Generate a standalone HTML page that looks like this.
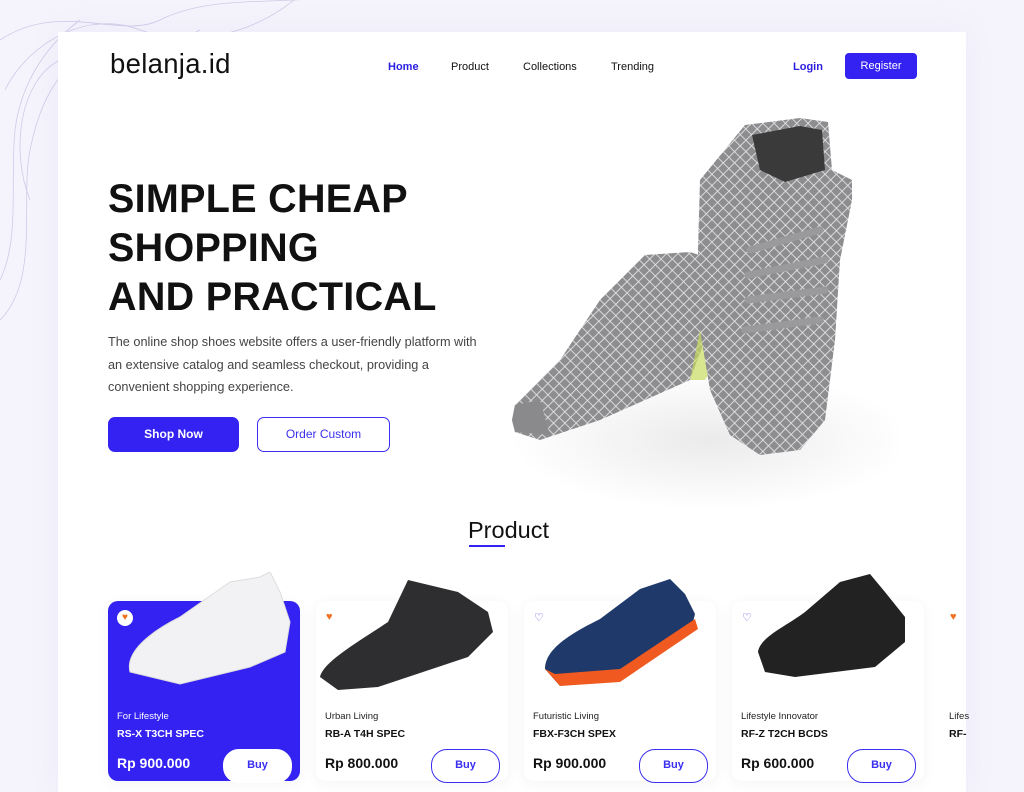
<!DOCTYPE html>
<html><head><meta charset="utf-8"><style>
*{margin:0;padding:0;box-sizing:border-box}
body{width:1024px;height:768px;overflow:hidden;background:#f5f4fc;font-family:"Liberation Sans",sans-serif;position:relative}
.card{position:absolute;left:58px;top:32px;width:908px;height:760px;background:#fff;box-shadow:0 0 30px rgba(120,110,220,.08)}
.a{position:absolute}
.nav{font-size:11px;color:#111;top:61px}
h1{position:absolute;left:108px;top:175px;font-size:39.5px;line-height:49px;font-weight:700;color:#111;letter-spacing:.3px}
.p{left:108px;top:331px;font-size:12.7px;line-height:22.5px;color:#444;width:385px}
.pc{position:absolute;top:601px;width:192px;height:180px;border-radius:10px;background:#fff;box-shadow:0 2px 14px rgba(0,0,0,.05)}
.pc .c{position:absolute;left:9px;top:110px;font-size:9.5px;color:#222}
.pc .n{position:absolute;left:9px;top:127px;font-size:10.5px;font-weight:700;color:#111}
.pc .pr{position:absolute;left:9px;top:154px;font-size:14px;font-weight:700;color:#111}
.pc .b{position:absolute;left:115px;top:148px;width:69px;height:34px;border:1px solid #3a2ff0;border-radius:16px;color:#3a2ff0;font-size:11px;font-weight:700;text-align:center;line-height:30px;background:#fff}
.ht{position:absolute;left:10px;top:10px;font-size:11px;color:#f07020}
</style></head><body>
<svg class="a" style="left:0;top:0" width="420" height="340" fill="none" stroke="#cfcbe8" stroke-width="0.8">
<path d="M0 40 C60 0 120 40 160 20 C220 -10 300 10 360 -10"/>
<path d="M5 90 C30 40 90 10 140 30 C200 50 260 30 300 -5"/>
<path d="M30 200 C10 150 20 80 60 60 C100 40 130 70 200 30"/>
<path d="M0 320 C40 280 20 200 30 150 C40 100 60 60 110 40"/>
<path d="M0 280 C20 240 10 180 15 130 C20 90 40 50 80 20"/>
</svg>
<div class="card"></div>
<div class="a" style="left:110px;top:48px;font-size:27.5px;color:#111;letter-spacing:.3px">belanja.id</div>
<div class="a nav" style="left:388px;color:#2a1ee0;font-weight:700">Home</div>
<div class="a nav" style="left:451px">Product</div>
<div class="a nav" style="left:523px">Collections</div>
<div class="a nav" style="left:611px">Trending</div>
<div class="a nav" style="left:793px;color:#2a1ee0;font-weight:700">Login</div>
<div class="a" style="left:845px;top:53px;width:72px;height:26px;background:#3322f2;border-radius:4px;color:#fff;font-size:11px;text-align:center;line-height:26px">Register</div>
<h1>SIMPLE CHEAP<br>SHOPPING<br>AND PRACTICAL</h1>
<div class="a p">The online shop shoes website offers a user-friendly platform with an extensive catalog and seamless checkout, providing a convenient shopping experience.</div>
<div class="a" style="left:108px;top:417px;width:131px;height:35px;background:#3322f2;border-radius:7px;color:#fff;font-size:12px;font-weight:700;text-align:center;line-height:35px">Shop Now</div>
<div class="a" style="left:257px;top:417px;width:133px;height:35px;border:1px solid #3a2ff0;border-radius:7px;color:#3a2ff0;font-size:12px;text-align:center;line-height:33px">Order Custom</div>
<svg class="a" style="left:480px;top:100px" width="420" height="420">
<defs><pattern id="m" width="8" height="8" patternUnits="userSpaceOnUse" patternTransform="rotate(45)"><rect width="8" height="8" fill="#8d8d90"/><path d="M0 0H8M0 0V8" stroke="#e2e2e4" stroke-width="1.8"/></pattern>
<radialGradient id="sh"><stop offset="0" stop-color="#000" stop-opacity=".08"/><stop offset="1" stop-color="#000" stop-opacity="0"/></radialGradient></defs>
<ellipse cx="230" cy="340" rx="200" ry="70" fill="url(#sh)"/>
<path d="M32 320 L35 305 L80 260 L120 200 L165 155 L210 152 L240 162 L240 200 L225 240 L210 280 L120 320 L60 340 L35 332Z" fill="url(#m)"/>
<path d="M32 320 L35 305 L60 300 L70 335 L35 332Z" fill="#8a8a8c"/>
<path d="M230 180 L250 190 L245 250 L225 280 L210 280 Z" fill="#c8dc60" opacity=".7"/>
<path d="M220 80 L265 25 L320 18 L348 22 L352 70 L372 80 L372 100 L360 160 L355 240 L345 320 L320 350 L280 355 L250 335 L230 290 L220 230 L218 150Z" fill="url(#m)"/>
<path d="M272 35 L320 26 L342 30 L345 70 L305 82 L280 70Z" fill="#3a3a3a"/>
<path d="M270 150 L340 130 M268 175 L345 160 M268 200 L345 190 M265 230 L340 220" stroke="#9a9a9c" stroke-width="7" stroke-linecap="round"/>
</svg>
<div class="a" style="left:468px;top:517px;font-size:23.5px;color:#111">Product</div>
<div class="a" style="left:469px;top:545px;width:36px;height:2px;background:#3322f2"></div>
<div class="pc" style="left:108px;background:#3322f2">
<div class="ht" style="width:16px;height:16px;border-radius:50%;background:#fff;left:9px;top:9px;text-align:center;line-height:16px;font-size:10px">♥</div>
<div class="c" style="color:#fff;top:110px">For Lifestyle</div><div class="n" style="color:#fff">RS-X T3CH SPEC</div>
<div class="pr" style="color:#fff">Rp 900.000</div><div class="b" style="border-color:#fff">Buy</div></div>
<svg class="a" style="left:120px;top:572px" width="180" height="120"><path d="M10 100 C5 80 30 60 60 45 L110 10 L140 5 L150 0 L160 20 L170 50 L165 80 L130 95 L60 112 Z" fill="#f2f2f4" stroke="#ddd"/></svg>
<div class="pc" style="left:316px"><div class="ht">♥</div><div class="c">Urban Living</div><div class="n">RB-A T4H SPEC</div><div class="pr">Rp 800.000</div><div class="b">Buy</div></div>
<svg class="a" style="left:318px;top:572px" width="180" height="120"><path d="M2 105 C5 90 40 70 70 50 L90 8 L140 20 L170 40 L175 60 L150 85 L60 115 L20 118Z" fill="#2e2e30"/></svg>
<div class="pc" style="left:524px"><div class="ht" style="color:#5a4fe0">♡</div><div class="c">Futuristic Living</div><div class="n">FBX-F3CH SPEX</div><div class="pr">Rp 900.000</div><div class="b">Buy</div></div>
<svg class="a" style="left:540px;top:574px" width="165" height="120"><path d="M5 95 C5 75 30 60 60 45 L100 15 L130 5 L145 20 L155 40 L150 60 L80 100 L20 112Z" fill="#1f3a6a"/><path d="M5 95 L20 112 L80 108 L158 55 L155 45 L80 95 L15 100Z" fill="#f05a20"/></svg>
<div class="pc" style="left:732px"><div class="ht" style="color:#5a4fe0">♡</div><div class="c">Lifestyle Innovator</div><div class="n">RF-Z T2CH BCDS</div><div class="pr">Rp 600.000</div><div class="b">Buy</div></div>
<svg class="a" style="left:755px;top:572px" width="155" height="110"><path d="M3 80 C5 65 30 55 50 40 L85 10 L115 2 L130 20 L150 45 L150 70 L120 95 L40 105 L10 100Z" fill="#222"/></svg>
<div class="pc" style="left:940px;width:26px;border-radius:10px 0 0 10px;box-shadow:none"><div class="ht">♥</div><div class="c">Lifes</div><div class="n">RF-</div></div>
</body></html>
